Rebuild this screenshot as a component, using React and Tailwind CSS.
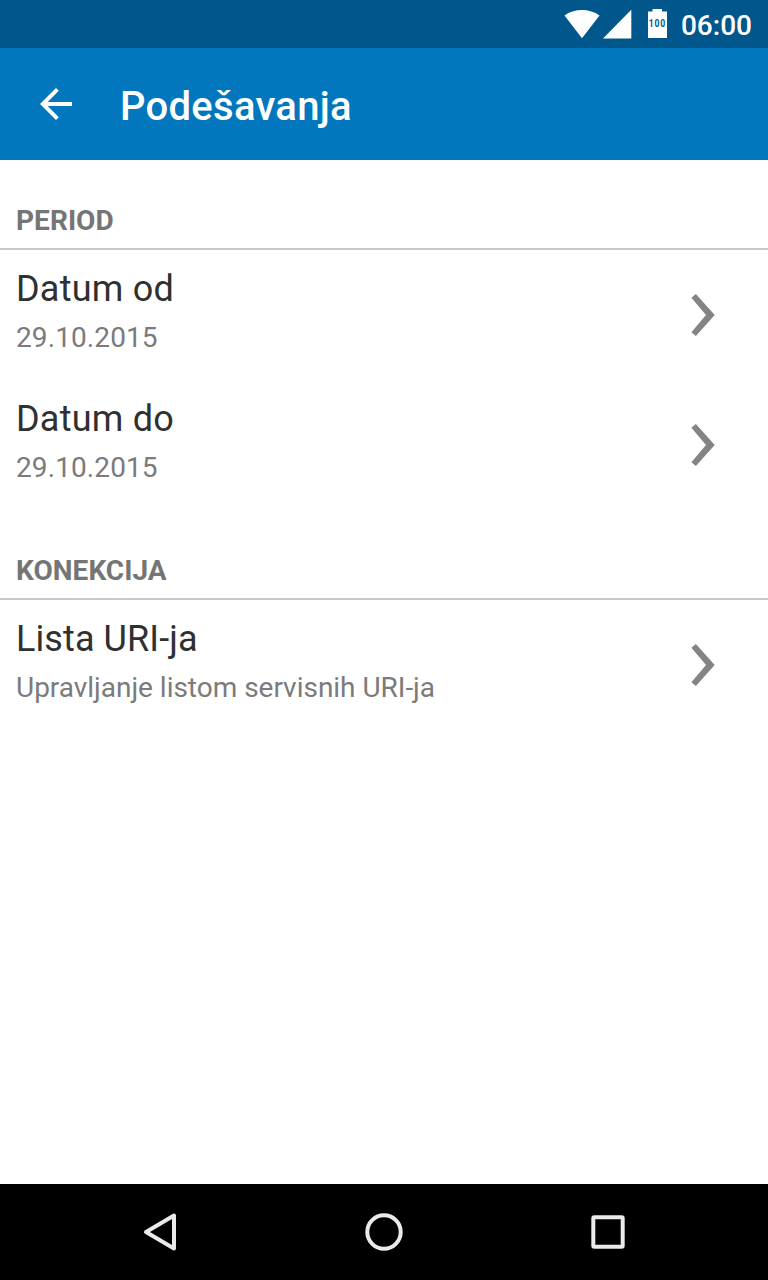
function StatusBar() {
  return (
    <div className="flex h-12 shrink-0 items-center justify-end bg-[#01578c] pr-4 text-white">
      <svg className="h-12 w-[110px] shrink-0" viewBox="0 0 110 48" fill="currentColor">
        <path d="M4.5 15.6C14.2 8.2 29.8 8.2 39.5 15.6L22 38.2Z" />
        <path d="M43 38.5H71.3V9.8Z" />
        <path d="M92.5 9H102V11.5H107V38H88V11.5H92.5Z" />
        <text
          transform="translate(88.8 27.2) scale(0.82 1)"
          className="fill-[#01578c] font-['Roboto',sans-serif] text-[10.5px] font-bold tracking-[1px]"
        >
          100
        </text>
      </svg>
      <span className="ml-[11px] mt-[3px] text-[28px] leading-8 font-medium">06:00</span>
    </div>
  );
}

function Section({ title, children }) {
  return (
    <section>
      <h2 className="mt-[44px] border-b-2 border-[#c8c8c8] px-4 pb-[11px] text-[28px] leading-[33px] font-bold tracking-[0.05px] text-[#757575]">
        {title}
      </h2>
      {children}
    </section>
  );
}

function Item({ title, detail, titleTracking = "tracking-[0.23px]", detailTracking = "tracking-[0.1px]" }) {
  return (
    <div className="flex h-[130px] items-center justify-between pr-[48px] pl-4">
      <div className="h-full pt-[18px]">
        <div className={`text-[36px] leading-[42px] text-[#303030] ${titleTracking}`}>{title}</div>
        <div className={`mt-[11px] text-[28px] leading-[33px] text-[#7b7b7b] ${detailTracking}`}>{detail}</div>
      </div>
      <svg className="h-[48px] w-[32px]" viewBox="0 0 32 48" fill="#848484">
        <path d="M7.9 3L26.7 24L7.9 45L3.4 41.2L18 24L3.4 6.8Z" />
      </svg>
    </div>
  );
}

export default function App() {
  return (
    <div className="flex h-[1280px] w-[768px] flex-col bg-white font-['Roboto',sans-serif]">
      <StatusBar />
      <header className="flex h-28 shrink-0 items-center bg-[#0277bd] pl-8 text-white">
        <svg className="size-12" viewBox="0 0 24 24" fill="currentColor">
          <path d="M20 11H7.83l5.59-5.59L12 4l-8 8 8 8 1.41-1.41L7.83 13H20v-2z" />
        </svg>
        <h1 className="mt-1.5 ml-10 text-[40px] leading-[48px] font-medium tracking-[0.28px]">Podešavanja</h1>
      </header>
      <main className="flex-1">
        <Section title="PERIOD">
          <Item title="Datum od" detail="29.10.2015" />
          <Item title="Datum do" detail="29.10.2015" />
        </Section>
        <Section title="KONEKCIJA">
          <Item
            title="Lista URI-ja"
            detail="Upravljanje listom servisnih URI-ja"
            titleTracking="tracking-[0.1px]"
            detailTracking="tracking-[-0.02px]"
          />
        </Section>
      </main>
      <nav className="flex h-24 shrink-0 items-center justify-between bg-black px-[136px]">
        <svg className="size-12" viewBox="0 0 48 48" fill="none" stroke="#eaeaea" strokeWidth="4" strokeLinejoin="round">
          <path d="M10 24L38 7.5V40.5Z" />
        </svg>
        <svg className="size-12" viewBox="0 0 48 48" fill="none" stroke="#eaeaea" strokeWidth="4">
          <circle cx="24" cy="24" r="16.7" />
        </svg>
        <svg className="size-12" viewBox="0 0 48 48" fill="none" stroke="#eaeaea" strokeWidth="4">
          <rect x="9.3" y="9.3" width="29.4" height="29.4" rx="1" />
        </svg>
      </nav>
    </div>
  );
}
